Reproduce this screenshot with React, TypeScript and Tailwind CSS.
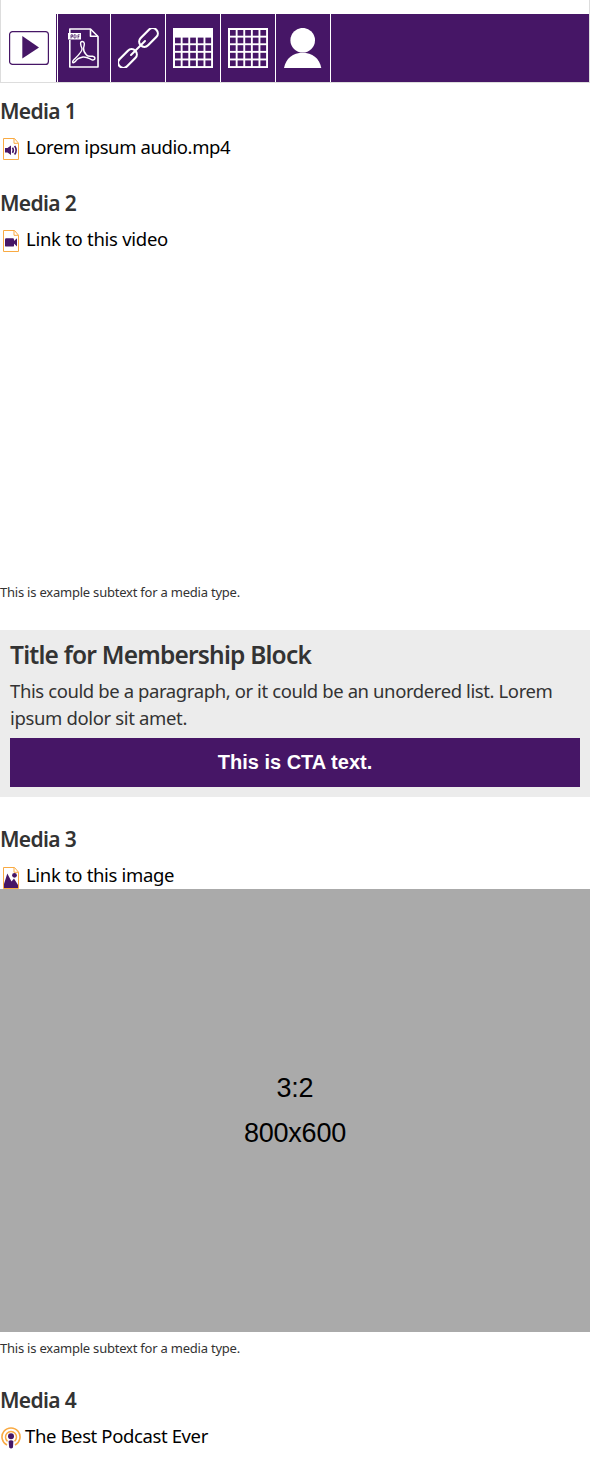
import React from "react";

const purple = "#461666";
const sans = "font-['Noto_Sans',sans-serif]";

function PlayIcon() {
  return (
    <svg width="40" height="34" viewBox="0 0 40 34" fill="none">
      <rect x=".6" y=".6" width="38.8" height="32.8" rx="3" stroke={purple} strokeWidth="1.2" />
      <path d="M13.3 5L30 16.5L13.3 27.5Z" fill={purple} />
    </svg>
  );
}

function PdfIcon() {
  return (
    <svg width="31" height="40" viewBox="0 0 31 40" fill="none" stroke="#fff" strokeWidth="1.6" strokeLinejoin="round">
      <path d="M1.8 5V1H22.5L30 8.5V39H1.8V12" />
      <path d="M22.5 1V8.3H30" />
      <rect x="0" y="5" width="13" height="6.5" fill="#fff" stroke="none" />
      <path d="M3 10.5V6.8H4.6V8.8H3M6 6.8V10H7.5L8 9.3V7.4L7.5 6.8ZM10 10.5V6.8H11.7M10 8.6H11.3" stroke={purple} strokeWidth=".8" />
      <path d="M14.3 13.5C11.8 13.3 12.4 17 14 20.5C14.8 23.5 9 28.5 6 31.5C3.4 34.4 5 36 7.3 33.6C8.5 31.5 11.5 29.7 15 29C19 28.6 21 30.6 24 31.8C27.5 32.8 28 28.8 24.5 28.2C22 28.2 20 28.8 18.5 27C16.5 25 15.3 22.5 15.6 20C16.3 17 17.3 13.7 14.3 13.5Z" strokeWidth="1.4" />
    </svg>
  );
}

function LinkIcon() {
  return (
    <svg width="41" height="40" viewBox="0 0 41 40" fill="none" stroke="#fff" strokeWidth="2.2">
      <rect x="-11" y="-5.2" width="22" height="10.4" rx="5.2" transform="translate(30.5 9.5) rotate(-45)" />
      <rect x="-11" y="-5.2" width="22" height="10.4" rx="5.2" transform="translate(9.5 30.5) rotate(-45)" />
      <path d="M13 27L27 13" strokeWidth="2" strokeLinecap="round" />
    </svg>
  );
}

function GridIcon({ header = false }: { header?: boolean }) {
  const rows = header ? [1, 2, 3, 4] : [0, 1, 2, 3, 4];
  return (
    <svg width="40" height="40" viewBox="0 0 40 40">
      <path d="M0 0H40V40H0Z" fill="#fff" />
      {rows.map((r) =>
        [0, 1, 2, 3, 4].map((c) => (
          <rect key={`${r}-${c}`} x={2 + c * 7.6} y={2 + r * 7.6} width="5.7" height="5.7" fill={purple} />
        )),
      )}
    </svg>
  );
}

function PersonIcon() {
  return (
    <svg width="38" height="40" viewBox="0 0 38 40" fill="#fff">
      <circle cx="18.7" cy="12.2" r="12.3" />
      <path d="M0 40C2 30 9 24.7 18.6 24.7S35.4 30 37.3 40Z" />
    </svg>
  );
}

function FileIcon({ children }: { children: React.ReactNode }) {
  return (
    <svg className="shrink-0" width="16" height="22" viewBox="0 0 16 22" fill="none">
      {children}
      <path d="M.5 .5H11.5L15.5 5.2V21.5H.5ZM11 .7V5.3H15.3" stroke="#f9aa43" />
    </svg>
  );
}

function AudioIcon() {
  return (
    <FileIcon>
      <path d="M2 10H4.5L8 7.5V17L4.5 14.5H2Z" fill={purple} />
      <path d="M9.5 9.6Q11.2 12.2 9.5 14.9M11.6 8Q14.8 12.2 11.6 16.5" stroke={purple} strokeWidth="1.6" />
    </FileIcon>
  );
}

function VideoIcon() {
  return (
    <FileIcon>
      <rect x="2" y="8.2" width="9" height="8.4" rx="1.2" fill={purple} />
      <path d="M9.5 12.3L14 8.2V16.4Z" fill={purple} />
    </FileIcon>
  );
}

function ImageIcon() {
  return (
    <FileIcon>
      <path d="M1 21V17L4.3 6.5L8.5 14.5L11 11.5L15 18V21Z" fill={purple} />
      <circle cx="11.5" cy="8.3" r="2.4" fill={purple} />
    </FileIcon>
  );
}

function PodcastIcon() {
  return (
    <svg className="shrink-0" width="20" height="22" viewBox="0 0 20 22" fill="none">
      <path d="M6 18A9 9 0 1 1 14 18" stroke="#f9aa43" strokeWidth="1.6" />
      <path d="M6.5 14.3A5.5 5.5 0 1 1 13.5 14.3" stroke="#f9aa43" strokeWidth="1.5" />
      <circle cx="10" cy="9.3" r="3" fill={purple} />
      <path d="M7.6 14Q10 12.3 12.4 14L12 20.5Q10 22.5 8.2 20.5Z" fill={purple} />
    </svg>
  );
}

function Tab({ children }: { children: React.ReactNode }) {
  return <li className="flex h-[68px] w-[55px] shrink-0 items-center justify-center border-r border-white">{children}</li>;
}

function Heading({ children }: { children: React.ReactNode }) {
  return <h2 className="h-[30px] whitespace-nowrap pt-px text-[21px] leading-[30px] font-semibold tracking-[-0.65px] text-[#333]">{children}</h2>;
}

export default function App() {
  return (
    <main className={`h-[1464px] w-[590px] overflow-hidden bg-white text-black ${sans}`}>
      <nav className="flex h-[83px] border-x border-b border-[#ddd] pt-[14px]">
        <div className="flex w-[55px] shrink-0 items-center justify-center pl-px">
          <PlayIcon />
        </div>
        <ul className="flex flex-1 bg-[#461666]">
          <li className="w-[2px] shrink-0 border-r border-white" />
          <li className="flex h-[68px] w-[53px] shrink-0 items-center justify-center border-r border-white pr-px"><PdfIcon /></li>
          <Tab><LinkIcon /></Tab>
          <Tab><GridIcon header /></Tab>
          <Tab><GridIcon /></Tab>
          <Tab><PersonIcon /></Tab>
        </ul>
      </nav>

      <section className="pt-[12px]">
        <Heading>Media 1</Heading>
        <a className="flex h-[44px] items-start gap-[7px] pt-[13px] pl-[3px]">
          <AudioIcon />
          <span className="-mt-[6px] whitespace-nowrap text-[18.5px] leading-[30px] tracking-[-0.4px]">Lorem ipsum audio.mp4</span>
        </a>
      </section>

      <section className="mt-[18px] h-[443px]">
        <Heading>Media 2</Heading>
        <a className="flex h-[44px] items-start gap-[7px] pt-[13px] pl-[3px]">
          <VideoIcon />
          <span className="-mt-[6px] whitespace-nowrap text-[18.5px] leading-[30px] tracking-[-0.28px]">Link to this video</span>
        </a>
        <p className="mt-[321px] whitespace-nowrap text-[13px] leading-[20px] tracking-[-0.22px] text-[#333]">This is example subtext for a media type.</p>
      </section>

      <section className="h-[167px] bg-[#ececec] px-[10px] pt-[9px] text-[#333]">
        <h2 className="h-[38px] whitespace-nowrap text-[24.5px] leading-[32px] font-semibold tracking-[-0.8px]">Title for Membership Block</h2>
        <p className="h-[61px] whitespace-nowrap text-[18.5px] leading-[27px] tracking-[-0.4px]">
          This could be a paragraph, or it could be an unordered list. Lorem<br />
          <span className="tracking-[-0.35px]">ipsum dolor sit amet.</span>
        </p>
        <button className="block h-[49px] w-full bg-[#461666] pb-[2px] font-['Liberation_Sans',sans-serif] text-[20px] font-bold text-white">This is CTA text.</button>
      </section>

      <section className="pt-[26px]">
        <Heading>Media 3</Heading>
        <a className="flex h-[36px] items-start gap-[7px] pt-[14px] pl-[3px]">
          <ImageIcon />
          <span className="-mt-[7px] whitespace-nowrap text-[18.5px] leading-[30px] tracking-[-0.33px]">Link to this image</span>
        </a>
        <div className="flex h-[443px] flex-col items-center justify-center bg-[#aaa] font-['Liberation_Sans',sans-serif] text-[27px] leading-[45px] tracking-[-0.25px]">
          <span>3:2</span>
          <span>800x600</span>
        </div>
        <p className="mt-[6px] whitespace-nowrap text-[13px] leading-[20px] tracking-[-0.22px] text-[#333]">This is example subtext for a media type.</p>
      </section>

      <section className="mt-[26px]">
        <Heading>Media 4</Heading>
        <a className="flex items-start gap-[4px] pt-[13px] pl-[1px]">
          <PodcastIcon />
          <span className="-mt-[6px] whitespace-nowrap text-[18.5px] leading-[30px] tracking-[-0.38px]">The Best Podcast Ever</span>
        </a>
      </section>
    </main>
  );
}
